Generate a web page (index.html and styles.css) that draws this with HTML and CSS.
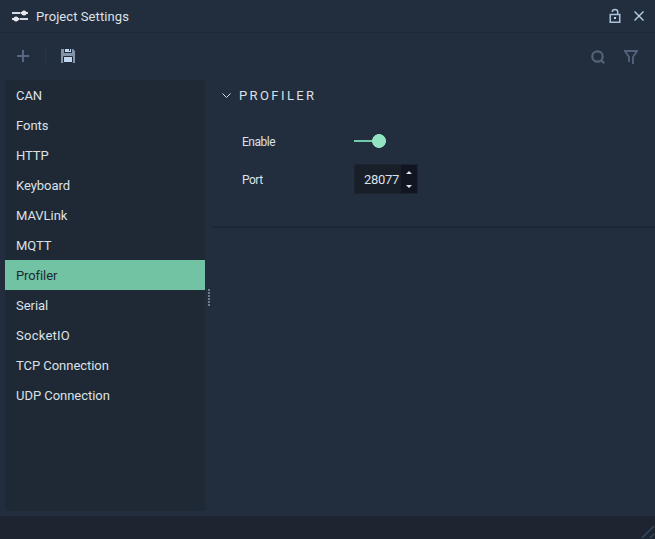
FILE: index.html
```html
<!DOCTYPE html>
<html lang="en">
<head>
<meta charset="utf-8">
<title>Project Settings</title>
<link rel="stylesheet" href="styles.css">
</head>
<body>
<div class="window">
  <header class="titlebar">
    <svg class="sliders" width="16" height="12" viewBox="0 0 16 12"><path d="M0 3h8.500M15 3h1M0 9h1M7.500 9H16" stroke="#d5dae2" stroke-width="2"/><path d="M9 3h6M1 9h6" stroke="#e6e9ee" stroke-width="2"/><circle cx="12" cy="3" r="2.500"/><circle cx="4" cy="9" r="2.500"/></svg>
    <h1 class="title">Project Settings</h1>
    <svg class="lock" width="12" height="16" viewBox="0 0 12 16"><path d="M1.250 6.500h9.500v7.750h-9.500zM3.300 4C3.300.8 8.700.8 8.700 4v2" fill="none" stroke="#aac3dc" stroke-width="1.500"/><rect x="5" y="9" width="2" height="2" fill="#c4d8ec"/></svg>
    <svg class="close" width="10" height="10" viewBox="0 0 10 10"><path d="M.5.5l9 9M9.500.5l-9 9" stroke="#b7d0e9" stroke-width="1.400"/></svg>
  </header>
  <div class="toolbar">
    <svg width="12" height="12" viewBox="0 0 12 12"><path d="M6 0v12M0 6h12" stroke="#566680" stroke-width="2"/></svg>
    <span class="divider"></span>
    <svg class="save" width="14" height="14" viewBox="0 0 14 14"><path d="M0 0h3v4h8V0h1l2 2v12H0z" fill="#8494a8"/><path d="M4 0h6v3H4zM3 8h8v5H3z" fill="#c2d7ef"/><path d="M2.500 13.500v-6h9v6z" fill="none" stroke="#202a38"/><path d="M8 0h1v2H8z" fill="#222d3d"/></svg>
    <svg class="search" width="14" height="14" viewBox="0 0 14 14"><circle cx="6.500" cy="6.500" r="5.200" fill="none" stroke="#52627b" stroke-width="2.200"/><path d="M10 10l3.300 3.300" stroke="#52627b" stroke-width="2.200"/></svg>
    <svg class="filter" width="14" height="14" viewBox="0 0 14 14"><path d="M5 12V7L1 1h12L9 7v7" fill="none" stroke="#52627b" stroke-width="1.900"/></svg>
  </div>
  <main class="content">
    <ul class="categories">
      <li>CAN</li><li>Fonts</li><li>HTTP</li><li>Keyboard</li><li>MAVLink</li><li>MQTT</li><li class="selected">Profiler</li><li>Serial</li><li class="wide">SocketIO</li><li>TCP Connection</li><li>UDP Connection</li>
    </ul>
    <div class="splitter"><span class="grip"></span></div>
    <section class="settings">
      <h2 class="heading"><svg width="9" height="6" viewBox="0 0 9 6"><path d="M.5.5l4 4 4-4" fill="none" stroke="#d5dce5"/></svg><span>PROFILER</span></h2>
      <div class="field"><span class="label">Enable</span><span class="toggle"></span></div>
      <div class="field"><span class="label">Port</span>
        <span class="spinner"><span class="value">28077</span><span class="arrows"><svg width="6" height="17" viewBox="0 0 6 17"><path d="M0 3l3-3 3 3zM0 14l3 3 3-3z" fill="#dfe4ed"/></svg></span></span>
      </div>
    </section>
  </main>
  <footer class="statusbar"><svg width="14" height="14" viewBox="0 0 14 14"><path d="M1 13L13 1M9 13l4-4" stroke="#2d4a63" stroke-width="1.500"/></svg></footer>
</div>
</body>
</html>
```

FILE: styles.css
```css
* { box-sizing: border-box; }
body { margin: 0; background: #222d3d; color: #dce1e8; font: 13px/30px Roboto, sans-serif; }
h1, h2, ul { margin: 0; padding: 0; font: inherit; }
svg { display: block; flex: none; }
.window { height: 539px; display: flex; flex-direction: column; }
.titlebar { height: 33px; display: flex; align-items: center; padding: 0 11px 0 12px; border-bottom: 1px solid #1d2735; }
.sliders { fill: #e6e9ee; margin-right: 8px; }
.title { flex: 1; padding-top: 2px; letter-spacing: 0.08px; }
.lock { margin-right: 13px; }
.toolbar { height: 47px; display: flex; align-items: center; padding: 0 17px 2px; }
.divider { width: 1px; height: 18px; background: #283343; margin: 0 15px 0 16px; }
.search { margin: 3px 19px 0 auto; }
.filter { margin-top: 3px; }
.content { height: 436px; display: flex; padding: 0 0 5px 5px; }
.categories { width: 200px; list-style: none; background: #1e2935; border-radius: 3px; }
.categories li { height: 30px; padding-left: 11px; padding-top: 1px; letter-spacing: -0.04px; }
.categories .wide { letter-spacing: 0.25px; }
.categories .selected { background: #72c3a4; color: #1e2935; letter-spacing: -0.1px; }
.splitter { width: 6px; display: flex; align-items: center; padding-left: 3px; }
.grip { width: 2px; height: 17px; margin-top: 4px; background: repeating-linear-gradient(#747c89 0 2px, transparent 2px 3px); }
.settings { flex: 1; height: 148px; border-bottom: 2px solid #1d2736; padding-left: 11px; }
.heading { height: 42px; display: flex; align-items: center; padding-bottom: 11px; gap: 8px; letter-spacing: 2.4px; }
.field { height: 38px; display: flex; align-items: center; padding-left: 20px; font-size: 12px; }
.label { width: 112px; padding-top: 1px; letter-spacing: -0.5px; }
.toggle { width: 32px; height: 14px; background: radial-gradient(circle at 25px 7px, #92e3c2 6.6px, transparent 7.2px), linear-gradient(#72c9a9, #72c9a9) 0 6px / 24px 2px no-repeat; }
.spinner { display: flex; width: 64px; height: 30px; border: 1px solid #1c2431; background: #191f28; font-size: 13px; }
.value { flex: 1; padding-left: 9px; line-height: 29px; letter-spacing: -0.3px; }
.arrows { width: 16px; background: #111522; display: grid; place-items: center; }
.statusbar { height: 23px; background: #1f2530; display: flex; justify-content: flex-end; align-items: flex-end; }
```
